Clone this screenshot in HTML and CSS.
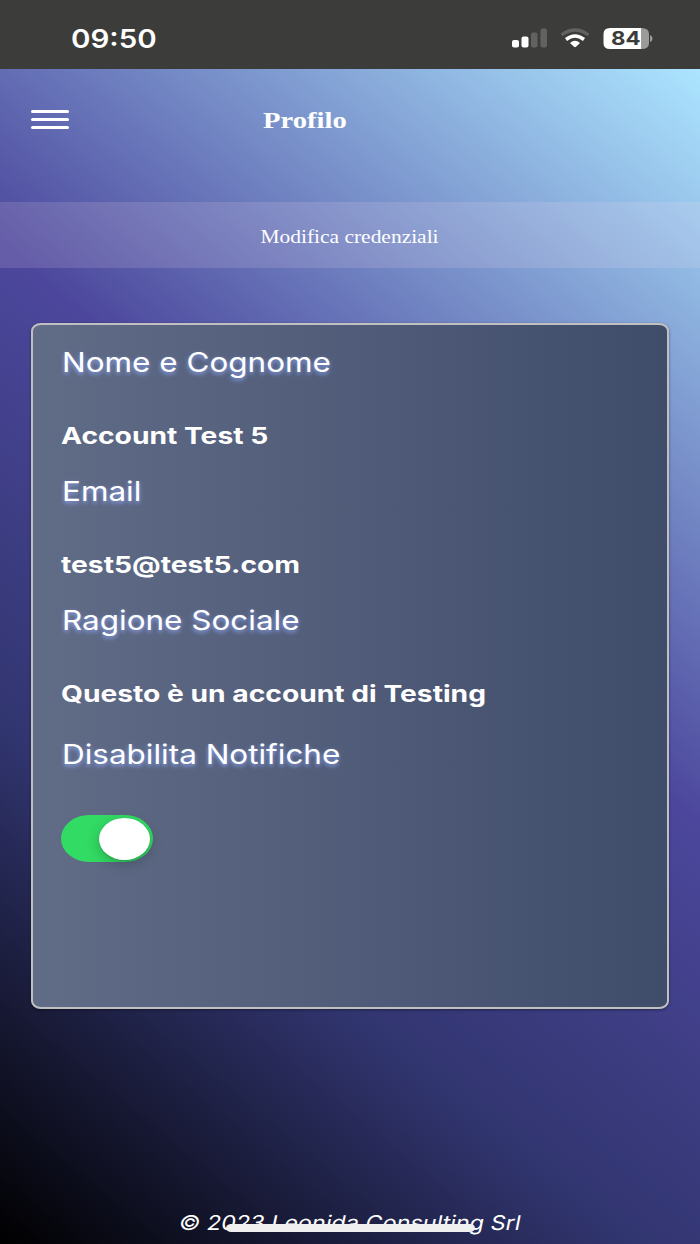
FILE: index.html
```html
<!DOCTYPE html>
<html lang="it">
<head>
  <meta charset="UTF-8">
  <title>Profilo</title>
  <link rel="stylesheet" href="styles.css">
</head>
<body>

  <div class="status-bar">
    <span class="time">09:50</span>
    <svg class="status-icons" width="144" height="24" viewBox="0 0 144 24">
      <rect x="0" y="13" width="7" height="7.500" rx="2" fill="#fff"/>
      <rect x="9.500" y="9.500" width="7" height="11" rx="2" fill="#fff"/>
      <rect x="19" y="5.500" width="6.500" height="15" rx="2" fill="#626260"/>
      <rect x="28.500" y="1.500" width="6.500" height="19" rx="2" fill="#626260"/>
      <path d="M49.500 8Q63 -2 76.500 8" fill="none" stroke="#626260" stroke-width="3.400"/>
      <path d="M54 12.500Q63 5.600 72 12.500" fill="none" stroke="#fff" stroke-width="3.500"/>
      <path d="M58 16Q63 11.600 68 16L64 19.800Q63 20.500 62 19.800Z" fill="#fff"/>
      <path d="M98 1H129.500V22H98Q91.500 22 91.500 16V7Q91.500 1 98 1Z" fill="#fff"/>
      <path d="M129.500 1Q137 1 137 7V16Q137 22 129.500 22Z" fill="#9b9b9a"/>
      <path d="M138 8Q140.500 9 140.500 11.500Q140.500 14 138 15Z" fill="#9b9b9a"/>
      <text class="battery" x="99" y="18" textLength="29.500" lengthAdjust="spacingAndGlyphs">84</text>
    </svg>
  </div>

  <div class="page">
    <div class="header">
      <div class="menu">
        <span></span>
        <span></span>
        <span></span>
      </div>
      <h1>Profilo</h1>
    </div>

    <button class="edit"><span>Modifica credenziali</span></button>

    <div class="card">
      <div class="label">Nome e Cognome</div>
      <div class="value">Account Test 5</div>
      <div class="label">Email</div>
      <div class="value">test5@test5.com</div>
      <div class="label">Ragione Sociale</div>
      <div class="value company">Questo è un account di Testing</div>
      <div class="label">Disabilita Notifiche</div>
      <div class="toggle"><div class="knob"></div></div>
    </div>

    <footer><span>© 2023 Leonida Consulting Srl</span></footer>
    <div class="home-bar"></div>
  </div>

</body>
</html>
```

FILE: styles.css
```css
* {
  box-sizing: border-box;
}
body {
  margin: 0;
  width: 700px;
  height: 1244px;
  overflow: hidden;
  color: #fff;
  font-family: Inter, sans-serif;
}
.status-bar {
  height: 69px;
  padding: 0 44px 0 71px;
  display: flex;
  justify-content: space-between;
  background: #3c3c3a;
}
.time {
  margin-top: 23px;
  font-size: 26px;
  line-height: 32px;
  font-weight: 600;
  transform: scaleX(1.135);
  transform-origin: left;
}
.status-icons {
  margin-top: 27px;
}
.battery {
  font-size: 19px;
  font-weight: 700;
  fill: #3c3c3a;
}
.page {
  position: relative;
  height: 1175px;
  display: flex;
  flex-direction: column;
  background: linear-gradient(39.4deg, #000 0%, #31356f 29.500%, #4c479c 57%, #ace5ff 100%);
}
.header {
  height: 133px;
  display: flex;
}
.menu {
  margin: 41px 0 0 31px;
  width: 38px;
  height: 19px;
  display: flex;
  flex-direction: column;
  justify-content: space-between;
}
.menu span {
  height: 3px;
  border-radius: 2px;
  background: #fff;
}
h1 {
  margin: 37px 0 0 194px;
  height: 28px;
  font-family: "Liberation Serif", serif;
  font-size: 23.700px;
  line-height: 28px;
  transform: scaleX(1.21);
  transform-origin: left;
}
.edit {
  height: 66px;
  padding: 4px 1px 0 0;
  border: none;
  color: #fff;
  background: rgba(255, 230, 240, 0.14);
  font-family: "Liberation Serif", serif;
  font-size: 18.200px;
}
.edit span {
  display: inline-block;
  transform: scaleX(1.18);
}
.card {
  margin: 55px 31px 0;
  height: 686px;
  padding: 18px 29px;
  border: 2px solid #c0c0c0;
  border-radius: 10px / 8px;
  background: linear-gradient(90deg, #616c87, #3f4c6a);
  box-shadow: 0 1px 3px rgba(0, 0, 0, 0.4);
  display: flex;
  flex-direction: column;
  align-items: flex-start;
}
.label {
  height: 40px;
  margin-left: -0.500px;
  line-height: 40px;
  font-size: 27px;
  white-space: nowrap;
  text-shadow: 0 2px 4px #8ea6f5;
  transform: scaleX(1.165);
  transform-origin: left;
}
.value {
  height: 30px;
  margin: 38px 0 21px -1px;
  line-height: 30px;
  font-size: 22.700px;
  font-weight: 700;
  white-space: nowrap;
  transform: scaleX(1.243);
  transform-origin: left;
}
.company {
  margin-bottom: 26px;
}
.toggle {
  width: 92px;
  height: 47px;
  margin: 40px 0 0 -1px;
  padding: 2.500px 3px;
  display: flex;
  justify-content: flex-end;
  border-radius: 28px / 23.500px;
  background: #32db64;
}
.knob {
  width: 51px;
  height: 42px;
  border-radius: 50%;
  background: #fff;
  box-shadow: 0 4px 14px rgba(0, 0, 0, 0.22), 0 1px 2px rgba(0, 0, 0, 0.15);
}
footer {
  margin-top: 199px;
  height: 30px;
  line-height: 30px;
  font-size: 20.400px;
  text-align: center;
}
footer span {
  display: inline-block;
  transform: scaleX(1.147) skewX(-10deg);
}
.home-bar {
  position: absolute;
  left: 226px;
  bottom: 12px;
  width: 249px;
  height: 8px;
  border-radius: 5px / 4px;
  background: #efefef;
}
```
